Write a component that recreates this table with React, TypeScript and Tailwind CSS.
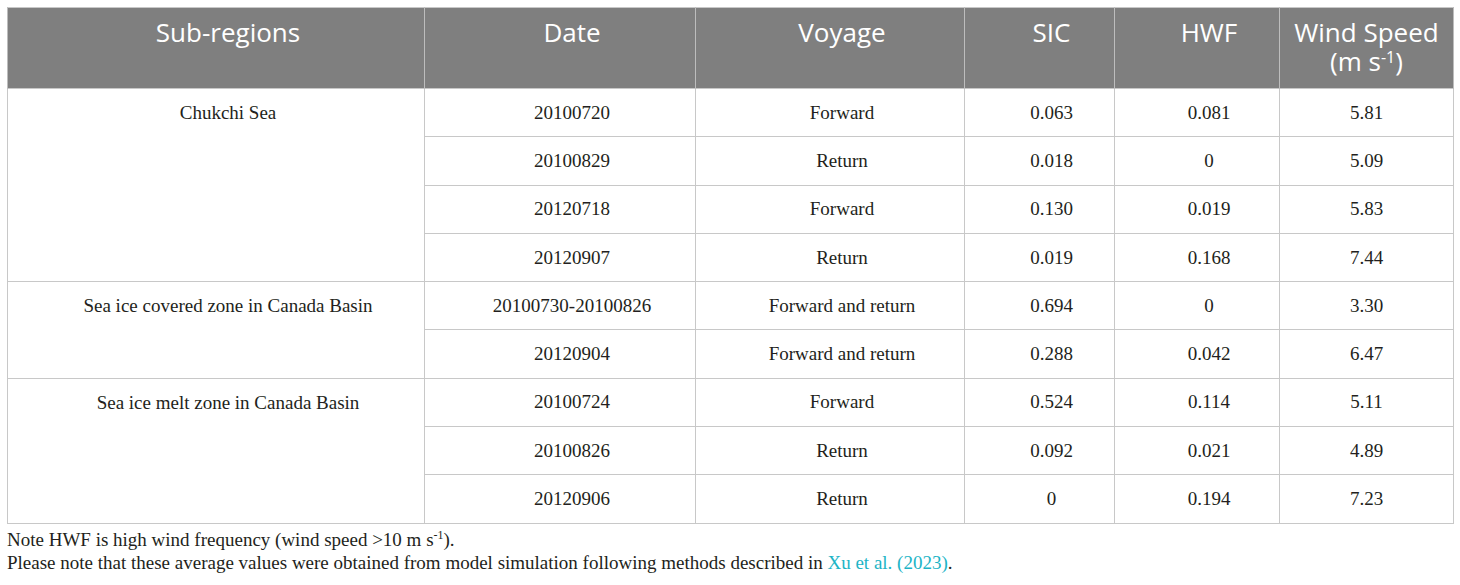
import React from 'react';

type Row = {
  date: string;
  voyage: string;
  sic: string;
  hwf: string;
  wind: string;
};

type Group = {
  region: string;
  rows: Row[];
};

const groups: Group[] = [
  {
    region: 'Chukchi Sea',
    rows: [
      { date: '20100720', voyage: 'Forward', sic: '0.063', hwf: '0.081', wind: '5.81' },
      { date: '20100829', voyage: 'Return', sic: '0.018', hwf: '0', wind: '5.09' },
      { date: '20120718', voyage: 'Forward', sic: '0.130', hwf: '0.019', wind: '5.83' },
      { date: '20120907', voyage: 'Return', sic: '0.019', hwf: '0.168', wind: '7.44' },
    ],
  },
  {
    region: 'Sea ice covered zone in Canada Basin',
    rows: [
      { date: '20100730-20100826', voyage: 'Forward and return', sic: '0.694', hwf: '0', wind: '3.30' },
      { date: '20120904', voyage: 'Forward and return', sic: '0.288', hwf: '0.042', wind: '6.47' },
    ],
  },
  {
    region: 'Sea ice melt zone in Canada Basin',
    rows: [
      { date: '20100724', voyage: 'Forward', sic: '0.524', hwf: '0.114', wind: '5.11' },
      { date: '20100826', voyage: 'Return', sic: '0.092', hwf: '0.021', wind: '4.89' },
      { date: '20120906', voyage: 'Return', sic: '0', hwf: '0.194', wind: '7.23' },
    ],
  },
];

const th =
  'border-x border-[#bdbdbd] pl-[30px] pr-[6px] pt-[10px] pb-[10px] align-top text-center font-normal text-[26px] leading-[29px] text-white';
const td =
  'border border-[#c8c8c8] pl-[30px] pr-[6px] text-center align-middle text-[19px] leading-[24px] text-[#231f20]';

export default function App() {
  return (
    <div className="min-h-screen bg-white px-[7px] pt-[7px]" style={{ fontFamily: '"Liberation Serif", serif' }}>
      <table className="w-[1446px] table-fixed border-collapse border border-[#c8c8c8]">
        <colgroup>
          <col className="w-[417px]" />
          <col className="w-[271px]" />
          <col className="w-[269px]" />
          <col className="w-[150px]" />
          <col className="w-[165px]" />
          <col className="w-[174px]" />
        </colgroup>
        <thead>
          <tr className="h-[81px] bg-[#7f7f7f]" style={{ fontFamily: '"Open Sans", sans-serif' }}>
            <th className={th}>Sub-regions</th>
            <th className={th}>Date</th>
            <th className={th}>Voyage</th>
            <th className={th}>SIC</th>
            <th className={th}>HWF</th>
            <th className="border-x border-[#bdbdbd] px-[2px] pt-[10px] pb-[10px] align-top text-center font-normal text-[26px] leading-[29px] text-white">
              <div className="whitespace-nowrap">Wind Speed</div>
              <div className="whitespace-nowrap">
                (m s<span className="relative -top-[8px] text-[16px] leading-none">-1</span>)
              </div>
            </th>
          </tr>
        </thead>
        <tbody>
          {groups.map((group) =>
            group.rows.map((row, i) => (
              <tr key={group.region + row.date} className="h-[48.3px]">
                {i === 0 && (
                  <td
                    rowSpan={group.rows.length}
                    className="border border-[#c8c8c8] pl-[30px] pr-[6px] pt-[12px] text-center align-top text-[19px] leading-[24px] text-[#231f20]"
                  >
                    {group.region}
                  </td>
                )}
                <td className={td}>{row.date}</td>
                <td className={td}>{row.voyage}</td>
                <td className={td}>{row.sic}</td>
                <td className={td}>{row.hwf}</td>
                <td className="border border-[#c8c8c8] px-[2px] text-center align-middle text-[19px] leading-[24px] text-[#231f20]">
                  {row.wind}
                </td>
              </tr>
            ))
          )}
        </tbody>
      </table>
      <div className="mt-[4px] text-[19px] leading-[23px] text-[#231f20]">
        <p>
          Note HWF is high wind frequency (wind speed &gt;10 m s
          <span className="relative -top-[7px] text-[12px] leading-none">-1</span>).
        </p>
        <p>
          Please note that these average values were obtained from model simulation following methods described in{' '}
          <span className="text-[#1cb4c6]">Xu et al. (2023)</span>.
        </p>
      </div>
    </div>
  );
}
